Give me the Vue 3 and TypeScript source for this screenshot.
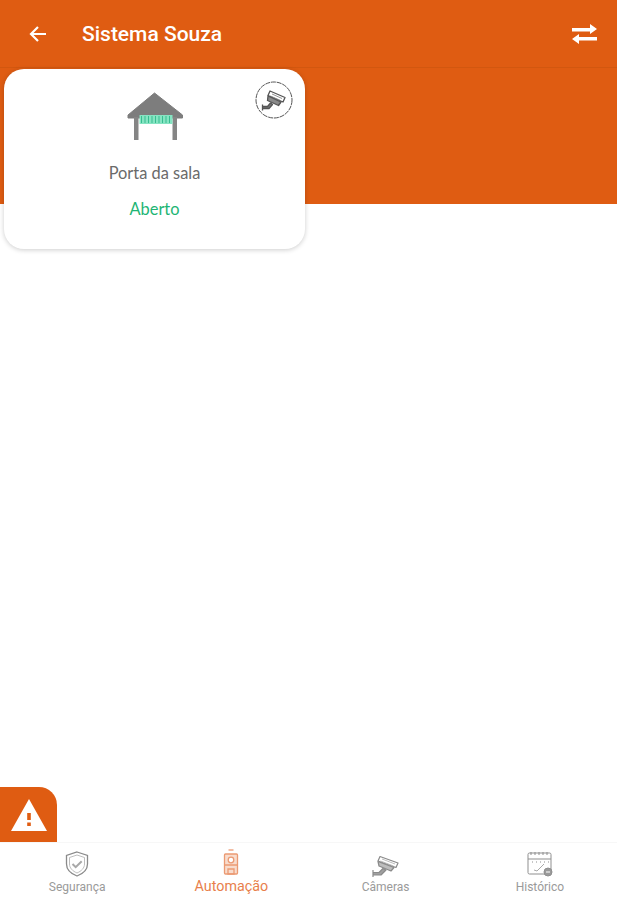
<template>
  <div class="app">
    <header class="topbar">
      <button class="icon-btn" aria-label="Voltar">
        <svg width="20" height="20" viewBox="0 0 20 20" fill="none" stroke="#fff" stroke-width="2.200">
          <path d="M18 10H3M10 3l-7 7 7 7" />
        </svg>
      </button>
      <h1>Sistema Souza</h1>
      <button class="icon-btn" aria-label="Trocar">
        <svg width="25" height="20" viewBox="0 0 25 20" fill="#fff">
          <path d="M0 4h18V0l7 5-7 5V7.500H0z" />
          <path d="M25 13H7v-3l-7 5 7 5v-3.500h18z" />
        </svg>
      </button>
    </header>

    <main class="content">
      <div class="band">
        <article class="card">
          <span class="cam-badge">
            <svg width="38" height="38" viewBox="0 0 38 38" fill="none">
              <circle cx="19" cy="19" r="18" stroke="#555" stroke-width="1" stroke-dasharray="5 0.800" />
              <g stroke="#555" stroke-width="1.300" stroke-linejoin="round">
                <path d="M15 10l15 6.500-2 4.500-15-6.500z" fill="#fff" />
                <path d="M17 13l10 4.500M15.500 15l10 4.500" stroke="#888" stroke-width="0.900" />
                <path d="M13 15l13 6-2.500 3.500-11-5z" fill="#8a8a8a" />
                <path d="M7.500 25.500h5l3-3.500 2 1.500-3.500 4h-6.500zM7.500 23.500v6" fill="#777" />
              </g>
            </svg>
          </span>
          <svg class="garage" width="58" height="50" viewBox="0 0 58 50">
            <path d="M28.500 1 56.500 23v3H2v-3z" fill="#7d7d7d" stroke="#7d7d7d" stroke-linejoin="round" />
            <rect x="8" y="25" width="4.500" height="23" fill="#858585" />
            <rect x="46.500" y="25" width="4.500" height="23" fill="#858585" />
            <rect x="13.500" y="23" width="33" height="9" fill="#86e4c2" />
            <path d="M15.500 24v7M19 24v7M22.500 24v7M26 24v7M29.500 24v7M33 24v7M36.500 24v7M40 24v7M43.500 24v7" stroke="#37bd90" stroke-width="1" />
          </svg>
          <p class="card-name">Porta da sala</p>
          <p class="card-status">{{ status }}</p>
        </article>
      </div>

      <button class="alert-tab" aria-label="Alerta">
        <svg width="36" height="32" viewBox="0 0 36 32">
          <path d="M18 0 36 32H0z" fill="#fff" />
          <rect x="16.200" y="14" width="3.600" height="7" fill="#e05d12" />
          <rect x="16.200" y="23.500" width="3.600" height="3.500" fill="#e05d12" />
        </svg>
      </button>
    </main>

    <nav class="tabs">
      <a v-for="tab in tabs" :key="tab.label" class="tab" :class="{ active: tab.active }">
        <svg v-if="tab.icon === 'shield'" width="26" height="26" viewBox="0 0 26 26" fill="none" stroke="#8a8a8a" stroke-width="1.300">
          <path d="M13 1 23.500 4.500v8.500c0 5.500-4 9.500-10.500 12C6.500 22.500 2.500 18.500 2.500 13V4.500z" />
          <path d="M13 4 20.500 6.500V13c0 4-3 7-7.500 9-4.500-2-7.500-5-7.500-9V6.500z" stroke="#b5b5b5" stroke-width="0.900" />
          <path d="M8.500 13l3.200 3.200 6-6" stroke-width="2" stroke="#a8a8a8" />
        </svg>
        <svg v-else-if="tab.icon === 'remote'" width="18" height="26" viewBox="0 0 18 26" fill="none" stroke="#eb9a73" stroke-width="1.300">
          <path d="M6.500 1h5" />
          <rect x="2.500" y="5" width="13" height="20" rx="1" fill="#f8dccd" />
          <circle cx="9" cy="11" r="2.800" fill="#fff" />
          <path d="M2.500 16h13M6 20h6v5H6z" />
        </svg>
        <svg v-else-if="tab.icon === 'camera'" width="28" height="22" viewBox="0 0 28 22" fill="none" stroke="#8a8a8a" stroke-width="1.200" stroke-linejoin="round">
          <path d="M8 1.500l18 6.500-2 4.500-18-6.500z" fill="#fff" />
          <path d="M10 4l13 5M8.500 6l13 5" stroke="#b5b5b5" stroke-width="0.900" />
          <path d="M6 6.500l16 6-3 3.500-12-5z" fill="#bdbdbd" />
          <path d="M1 17.500h6l4-4 3 1.500-5 5H1zM1 15v7" fill="#a0a0a0" />
        </svg>
        <svg v-else width="26" height="26" viewBox="0 0 26 26" fill="none" stroke="#8f8f8f" stroke-width="1">
          <rect x="1" y="2" width="23" height="21" rx="1.500" />
          <path d="M1 8h23" />
          <path d="M4 1v3M8 1v3M12 1v3M16 1v3M20 1v3" />
          <path d="M5 11h1M9 11h1M13 11h1M17 11h1M21 11h1" />
          <path d="M7 19l3 1 7-7" stroke="#aaa" />
          <circle cx="21" cy="21" r="4" fill="#9a9a9a" />
          <path d="M19 21h4" stroke="#fff" />
        </svg>
        <span>{{ tab.label }}</span>
      </a>
    </nav>
  </div>
</template>

<script setup lang="ts">
type Tab = {
  label: string
  icon: string
  active?: boolean
}

const status = 'Aberto'

const tabs: Tab[] = [
  { label: 'Segurança', icon: 'shield' },
  { label: 'Automação', icon: 'remote', active: true },
  { label: 'Câmeras', icon: 'camera' },
  { label: 'Histórico', icon: 'calendar' },
]
</script>

<style>
html,
body {
  margin: 0;
  background: #fff;
}
</style>

<style scoped>
.app {
  display: flex;
  flex-direction: column;
  height: 900px;
  overflow: hidden;
  background: #fff;
  font-family: Roboto, sans-serif;
}

.topbar {
  display: flex;
  align-items: center;
  flex: none;
  box-sizing: border-box;
  height: 68px;
  padding: 0 20px 0 28px;
  border-bottom: 1px solid #d2570f;
  background: #df5c12;
  color: #fff;
}

.topbar h1 {
  flex: 1;
  margin: 0 0 0 34px;
  font-size: 21px;
  font-weight: 500;
}

.icon-btn {
  display: flex;
  padding: 0;
  border: 0;
  background: none;
}

.content {
  display: flex;
  flex: 1;
  flex-direction: column;
}

.band {
  flex: none;
  height: 136px;
  background: #df5c12;
}

.card {
  position: relative;
  display: flex;
  flex-direction: column;
  align-items: center;
  box-sizing: border-box;
  width: 301px;
  height: 180px;
  margin: 1px 0 0 4px;
  padding-top: 23px;
  border-radius: 20px;
  background: #fff;
  box-shadow: 0 1px 5px rgba(0, 0, 0, 0.2);
}

.cam-badge {
  position: absolute;
  top: 12px;
  right: 12px;
  display: flex;
}

.garage {
  flex: none;
}

.card-name,
.card-status {
  margin: 0;
  font-family: Lato, sans-serif;
  font-size: 16.400px;
}

.card-name {
  margin-top: 21px;
  color: #6a6a6a;
}

.card-status {
  margin-top: 17px;
  color: #1db574;
}

.alert-tab {
  display: flex;
  flex: none;
  align-items: center;
  justify-content: center;
  width: 57px;
  height: 55px;
  margin-top: auto;
  padding: 0;
  border: 0;
  border-radius: 0 18px 0 0;
  background: #df5c12;
}

.tabs {
  display: grid;
  flex: none;
  grid-template-columns: repeat(4, 1fr);
  height: 58px;
  box-sizing: border-box;
  border-top: 1px solid #f7f7f7;
  background: #fff;
}

.tab {
  display: flex;
  flex-direction: column;
  align-items: center;
  justify-content: flex-end;
  gap: 3px;
  padding-bottom: 6px;
  color: #9a9a9a;
  font-size: 12px;
}

.tab.active {
  color: #e87f4c;
  font-size: 14.300px;
}
</style>
